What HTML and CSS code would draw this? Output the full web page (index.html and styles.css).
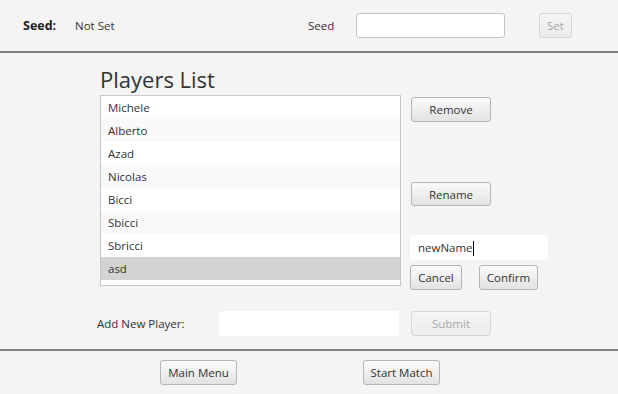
FILE: index.html
```html
<!DOCTYPE html>
<html lang="en">
<head>
  <meta charset="UTF-8">
  <meta name="viewport" content="width=device-width, initial-scale=1.0">
  <title>Players</title>
  <link rel="stylesheet" href="styles.css">
</head>
<body>
  <div class="topbar">
    <span class="seed-title">Seed:</span>
    <span class="seed-value">Not Set</span>
    <span class="seed-label">Seed</span>
    <input class="field seed-field" type="text">
    <button class="btn btn-set" disabled>Set</button>
  </div>
  <div class="separator"></div>

  <div class="main">
    <h1 class="title">Players List</h1>
    <div class="players">
      <ul class="player-list">
        <li>Michele</li>
        <li>Alberto</li>
        <li>Azad</li>
        <li>Nicolas</li>
        <li>Bicci</li>
        <li>Sbicci</li>
        <li>Sbricci</li>
        <li class="selected">asd</li>
      </ul>
      <div class="actions">
        <button class="btn btn-wide btn-remove">Remove</button>
        <button class="btn btn-wide btn-rename">Rename</button>
        <div class="rename-field">newName<span class="caret"></span></div>
        <div class="rename-buttons">
          <button class="btn btn-cancel">Cancel</button>
          <button class="btn btn-confirm">Confirm</button>
        </div>
      </div>
    </div>
    <div class="add-row">
      <span class="add-label">Add New Player:</span>
      <input class="field add-field" type="text">
      <button class="btn btn-wide" disabled>Submit</button>
    </div>
  </div>

  <div class="separator"></div>
  <div class="bottombar">
    <button class="btn btn-menu">Main Menu</button>
    <button class="btn btn-start">Start Match</button>
  </div>
</body>
</html>
```

FILE: styles.css
```css
body { margin: 0; background: #f4f4f4; font-family: "Open Sans", "Liberation Sans", sans-serif; font-size: 11.5px; color: #333; }
.separator { height: 2px; background: #808080; }

.topbar { height: 51px; display: flex; align-items: center; }
.seed-title { box-sizing: border-box; width: 75px; padding-left: 23px; font-weight: bold; font-size: 12.5px; color: #222; }
.seed-value { width: 233px; }
.seed-label { width: 48px; }
.field { box-sizing: border-box; height: 25px; border: 1px solid #c4c4c4; border-radius: 3px; background: #fff; font: inherit; padding: 0 7px; outline: none; }
.seed-field { width: 149px; }
.btn-set { margin-left: 34px; width: 33px; }

.btn { box-sizing: border-box; height: 25px; padding: 0; white-space: nowrap; border: 1px solid #b5b5b5; border-radius: 3px; background: linear-gradient(#fbfbfb, #e2e2e2); font: inherit; color: #333; }
.btn:disabled { color: #a8a8a8; border-color: #d6d6d6; background: linear-gradient(#f6f6f6, #ebebeb); }
.btn-wide { width: 80px; }

.main { height: 296px; }
.title { margin: 0 0 0 100px; height: 42px; font-size: 22px; font-weight: normal; line-height: 52px; }
.players { display: flex; margin-left: 100px; }
.player-list { list-style: none; margin: 0; padding: 0 0 5px; width: 299px; height: 184px; border: 1px solid #c8c8c8; background: #fff; }
.player-list li { height: 23px; line-height: 23px; padding-left: 7px; }
.player-list li:nth-child(even) { background: #f9f9f9; }
.player-list li.selected { background: #d3d3d3; }

.actions { display: flex; flex-direction: column; align-items: flex-start; margin-left: 9px; }
.btn-remove { margin: 2px 0 0 1px; }
.btn-rename { margin: 60px 0 0 1px; height: 24px; }
.rename-field { box-sizing: border-box; width: 138px; height: 25px; margin-top: 29px; padding-left: 8px; line-height: 25px; background: #fff; border-radius: 3px; }
.caret { display: inline-block; width: 1px; height: 15px; background: #000; vertical-align: middle; }
.rename-buttons { display: flex; margin-top: 5px; }
.btn-cancel { width: 52px; }
.btn-confirm { width: 59px; margin-left: 17px; }

.add-row { display: flex; align-items: center; margin: 21px 0 0 97px; }
.add-label { width: 122px; }
.add-field { width: 180px; border: none; }
.add-row .btn { margin-left: 12px; }

.bottombar { display: flex; padding-top: 9px; }
.btn-menu { margin-left: 160px; width: 77px; }
.btn-start { margin-left: 126px; width: 77px; }
```
